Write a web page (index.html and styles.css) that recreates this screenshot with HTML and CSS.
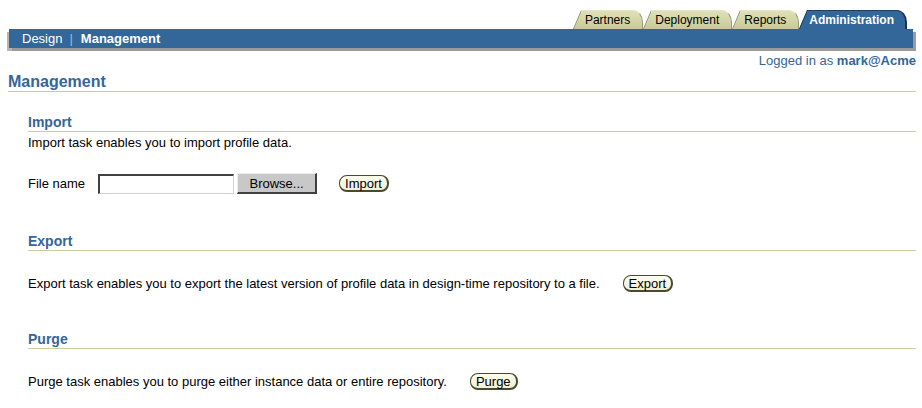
FILE: index.html
```html
<!DOCTYPE html>
<html>
<head>
<meta charset="utf-8">
<link rel="stylesheet" href="styles.css">
</head>
<body>
<div class="header">
  <div class="tabs">
    <a class="tab">Partners</a>
    <a class="tab">Deployment</a>
    <a class="tab">Reports</a>
    <a class="tab active">Administration</a>
  </div>
  <div class="bar">
    <span class="sub">Design</span>
    <span class="sep">|</span>
    <span class="sub current">Management</span>
  </div>
  <div class="user">Logged in as <b>mark@Acme</b></div>
</div>
<div class="page">
  <h1 class="title">Management</h1>
  <div class="section first">
    <h2 class="heading">Import</h2>
    <p class="desc">Import task enables you to import profile data.</p>
    <div class="row file-row">
      <span class="label">File name</span>
      <span class="field"></span>
      <span class="browse">Browse...</span>
      <span class="btn">Import</span>
    </div>
  </div>
  <div class="section">
    <h2 class="heading">Export</h2>
    <div class="row task-row">
      <span class="text">Export task enables you to export the latest version of profile data in design-time repository to a file.</span>
      <span class="btn">Export</span>
    </div>
  </div>
  <div class="section">
    <h2 class="heading">Purge</h2>
    <div class="row task-row">
      <span class="text">Purge task enables you to purge either instance data or entire repository.</span>
      <span class="btn">Purge</span>
    </div>
  </div>
</div>
</body>
</html>
```
FILE: styles.css
```css
html, body {
  margin: 0;
  padding: 0;
  background: #ffffff;
}
body {
  font-family: "Liberation Sans", Arial, sans-serif;
  font-size: 13px;
  color: #000000;
}
.header {
  display: flex;
  flex-direction: column;
}
.tabs {
  display: flex;
  justify-content: flex-end;
  padding: 10px 15px 0 0;
  height: 19px;
}
.tab {
  position: relative;
  isolation: isolate;
  display: flex;
  align-items: center;
  height: 19px;
  box-sizing: border-box;
  padding: 1px 13px 0 12px;
  color: #000;
  font-size: 12px;
  line-height: 14px;
}
.tab::before {
  content: "";
  position: absolute;
  left: 0;
  bottom: 0;
  height: 19px;
  width: 16px;
  box-sizing: border-box;
  background: linear-gradient(#e0e0b8, #c9c998);
  border-left: 1px solid #8f8f66;
  transform: skewX(-23deg);
  transform-origin: bottom left;
  z-index: -1;
}
.tab::after {
  content: "";
  position: absolute;
  left: 8px;
  right: 0;
  top: 0;
  bottom: 0;
  box-sizing: border-box;
  background: linear-gradient(#e0e0b8, #c9c998);
  border-top: 1px solid #e6e6c4;
  border-right: 1px solid #9a9a70;
  border-top-right-radius: 10px 12px;
  z-index: -1;
}
.tab.active {
  color: #fff;
  font-weight: bold;
  padding: 1px 13px 0 10px;
}
.tab.active::before {
  background: #336699;
  border-left: 1px solid #1e3f66;
}
.tab.active::after {
  background: #336699;
  border-top: 1px solid #1e3f66;
  border-right: 2px solid #1a3356;
}
.bar {
  display: flex;
  align-items: center;
  height: 19px;
  margin: 0 9px 0 9px;
  padding-left: 13px;
  background: #336699;
  box-shadow: 3px 3px 0 #9a9a9a, -2px 3px 0 #b4b4b4;
  color: #fff;
  font-size: 13px;
}
.sep {
  color: #99bbdd;
  margin: 0 8px 0 7px;
}
.current {
  font-weight: bold;
}
.user {
  align-self: flex-end;
  margin: 5px 6px 0 0;
  color: #336699;
  font-size: 13px;
  line-height: 15px;
}
.page {
  padding: 0 6px 0 8px;
}
.title {
  margin: 5px 0 0 0;
  font-size: 16px;
  line-height: 18px;
  color: #336699;
  border-bottom: 1px solid #cccc99;
}
.section {
  padding-left: 20px;
  margin-top: 39px;
}
.section.first {
  margin-top: 22px;
}
.heading {
  margin: 0;
  font-size: 14px;
  line-height: 16px;
  color: #336699;
  border-bottom: 1px solid #cccc99;
  padding-bottom: 1px;
}
.desc {
  margin: 3px 0 0 0;
  line-height: 15px;
}
.row {
  display: flex;
  align-items: center;
}
.file-row {
  margin-top: 23px;
}
.label {
  margin-right: 13px;
}
.field {
  width: 133px;
  height: 17px;
  border-top: 2px solid #404040;
  border-left: 2px solid #404040;
  border-right: 1px solid #d4d0c8;
  border-bottom: 1px solid #d4d0c8;
  background: #fff;
}
.browse {
  display: flex;
  align-items: center;
  justify-content: center;
  box-sizing: border-box;
  width: 80px;
  height: 21px;
  margin-left: 3px;
  padding-top: 1px;
  background: #c8c8c8;
  border-top: 1px solid #ececec;
  border-left: 1px solid #ececec;
  border-right: 2px solid #404040;
  border-bottom: 2px solid #404040;
  font-size: 13px;
}
.btn {
  display: inline-flex;
  align-items: center;
  box-sizing: border-box;
  height: 17px;
  padding: 0 5px 0 5px;
  background: linear-gradient(#fdfdf0, #f0f0d8);
  border: 1px solid #4a4a2e;
  border-right-width: 2px;
  border-bottom-width: 2px;
  border-radius: 8px;
  font-size: 13px;
}
.file-row .btn {
  margin-left: 22px;
}
.task-row {
  margin-top: 24px;
}
.task-row .btn {
  margin-left: 23px;
}
```
